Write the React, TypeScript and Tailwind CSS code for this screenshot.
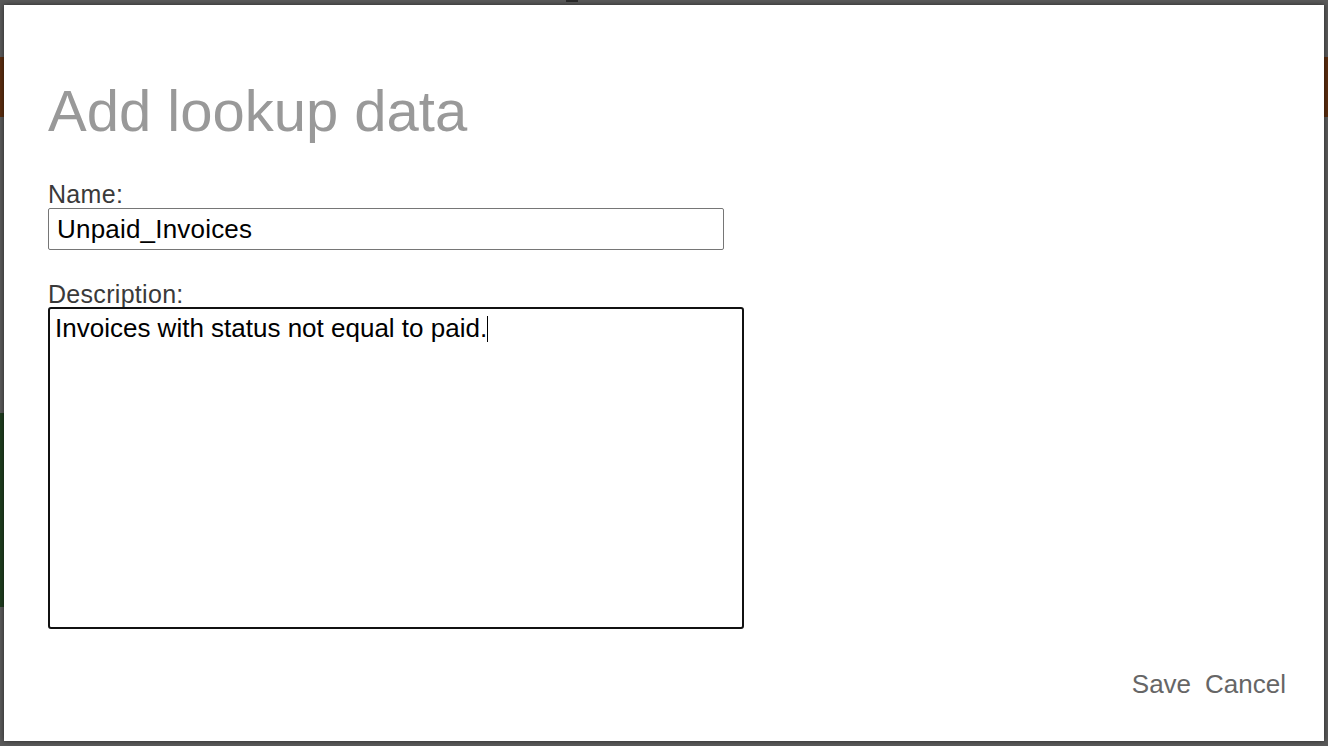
import React from 'react';

const font = { fontFamily: '"Liberation Sans", Arial, sans-serif' };

function Backdrop() {
  // bits of the page under the overlay that show at the edges
  return (
    <div className="absolute inset-0 bg-[#5a5a5a]">
      <div className="absolute left-0 right-0 top-[57px] h-[60px] bg-[#5b2d0f]" />
      <div className="absolute left-0 top-[413px] h-[194px] w-[6px] bg-[#1f3d1f]" />
      <div className="absolute left-[566px] top-0 h-[2px] w-[12px] bg-[#2a2a2a]" />
    </div>
  );
}

export default function App() {
  return (
    <div className="relative h-[746px] w-[1328px] overflow-hidden" style={font}>
      <Backdrop />
      <div className="relative ml-[4px] mt-[5px] flex h-[736px] w-[1320px] flex-col bg-white pl-[44px] pr-[38px] pt-[77px] shadow-[0_0_5px_rgba(0,0,0,0.55)]">
        <h1 className="text-[58px] leading-none font-normal text-[#999999]">Add lookup data</h1>

        <label className="mt-[42px] text-[25px] leading-none tracking-[0.3px] text-[#3a3a3a]">Name:</label>
        <div className="mt-[1px] flex h-[42px] w-[676px] items-center rounded-[2px] border border-[#767676] pl-[8px] text-[26px] tracking-[0.2px] text-black">
          Unpaid_Invoices
        </div>

        <label className="mt-[32px] text-[25px] leading-none tracking-[0.3px] text-[#3a3a3a]">Description:</label>
        <div className="h-[322px] w-[696px] rounded-[3px] border-2 border-[#111111] pl-[5px] pt-[4px] text-[26px] leading-[30px] text-black">
          Invoices with status not equal to paid.
          <span className="inline-block h-[26px] w-px bg-black align-[-5px]" />
        </div>

        <div className="mt-[42px] flex justify-end gap-[14px] text-[26px] leading-none text-[#666666]">
          <button className="cursor-pointer">Save</button>
          <button className="cursor-pointer">Cancel</button>
        </div>
      </div>
    </div>
  );
}
